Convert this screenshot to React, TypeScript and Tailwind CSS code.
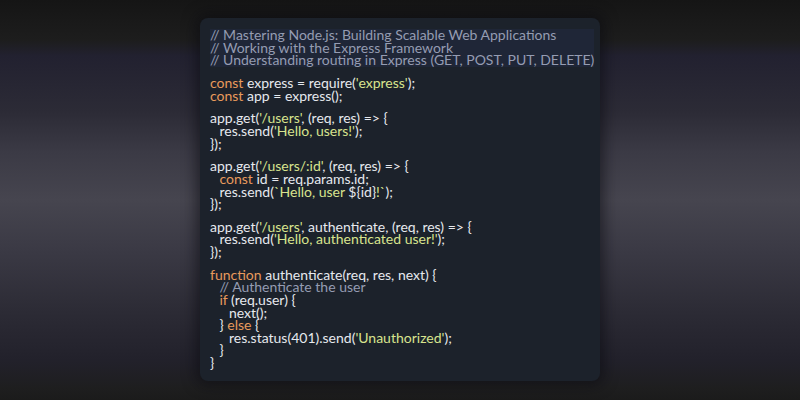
import React from "react";

type Tok = [string, string];
const C = "text-[#959cb2]"; // comment
const K = "text-[#e89a5c]"; // keyword
const S = "text-[#d8e48e]"; // string
const D = "text-[#e6e9ee]"; // default

const lines: any[] = [
  { indent: 0, band: true, toks: [[C, "// Mastering Node.js: Building Scalable Web Applications"]] },
  { indent: 0, band: true, toks: [[C, "// Working with the Express Framework"]] },
  { indent: 0, band: true, toks: [[C, "// Understanding routing in Express (GET, POST, PUT, DELETE)"]] },
  null,
  { indent: 0, toks: [[K, "const"], [D, " express = require("], [S, "'express'"], [D, ");"]] },
  { indent: 0, toks: [[K, "const"], [D, " app = express();"]] },
  null,
  { indent: 0, toks: [[D, "app.get("], [S, "'/users'"], [D, ", (req, res) => {"]] },
  { indent: 1, toks: [[D, "res.send("], [S, "'Hello, users!'"], [D, ");"]] },
  { indent: 0, toks: [[D, "});"]] },
  null,
  { indent: 0, toks: [[D, "app.get("], [S, "'/users/:id'"], [D, ", (req, res) => {"]] },
  { indent: 1, toks: [[K, "const"], [D, " id = req.params.id;"]] },
  { indent: 1, toks: [[D, "res.send("], [S, "`Hello, user "], [D, "${id}"], [S, "!`"], [D, ");"]] },
  { indent: 0, toks: [[D, "});"]] },
  null,
  { indent: 0, toks: [[D, "app.get("], [S, "'/users'"], [D, ", authenticate, (req, res) => {"]] },
  { indent: 1, toks: [[D, "res.send("], [S, "'Hello, authenticated user!'"], [D, ");"]] },
  { indent: 0, toks: [[D, "});"]] },
  null,
  { indent: 0, toks: [[K, "function"], [D, " authenticate(req, res, next) {"]] },
  { indent: 1, toks: [[C, "// Authenticate the user"]] },
  { indent: 1, toks: [[K, "if"], [D, " (req.user) {"]] },
  { indent: 2, toks: [[D, "next();"]] },
  { indent: 1, toks: [[D, "} "], [K, "else"], [D, " {"]] },
  { indent: 2, toks: [[D, "res.status(401).send("], [S, "'Unauthorized'"], [D, ");"]] },
  { indent: 1, toks: [[D, "}"]] },
  { indent: 0, toks: [[D, "}"]] },
];

const indentCls = ["pl-0", "pl-[9.5px]", "pl-[19px]"];

export default function App() {
  return (
    <div
      className="w-[800px] h-[400px] flex items-start justify-center pt-[18px]"
      style={{
        background:
          "linear-gradient(to bottom, #151515 0%, #1d1d1d 10%, #222130 14%, #2c2b36 28%, #3b3a45 38%, #46454f 50%, #3b3a45 62%, #2c2b35 78%, #22212b 90%, #1e1e1f 97%, #1b1b1b 100%)",
      }}
    >
      <div
        className="w-[400px] h-[363px] rounded-[8px] bg-[#1c222b] pl-[10px] pr-[6px] pt-[11px] shadow-[0_0_14px_4px_rgba(10,10,14,0.55)]"
        style={{ fontFamily: "Lato, 'Noto Sans', sans-serif" }}
      >
        {lines.map((ln, i) =>
          ln === null ? (
            <div key={i} className="h-[10.2px]" />
          ) : (
            <div
              key={i}
              className={`h-[12.6px] leading-[12.6px] text-[14px] whitespace-pre ${indentCls[ln.indent]} ${ln.band ? "bg-[#1f2637]" : ""}`}
            >
              {ln.toks.map((t: Tok, j: number) => (
                <span key={j} className={t[0]}>
                  {t[1]}
                </span>
              ))}
            </div>
          )
        )}
      </div>
    </div>
  );
}
